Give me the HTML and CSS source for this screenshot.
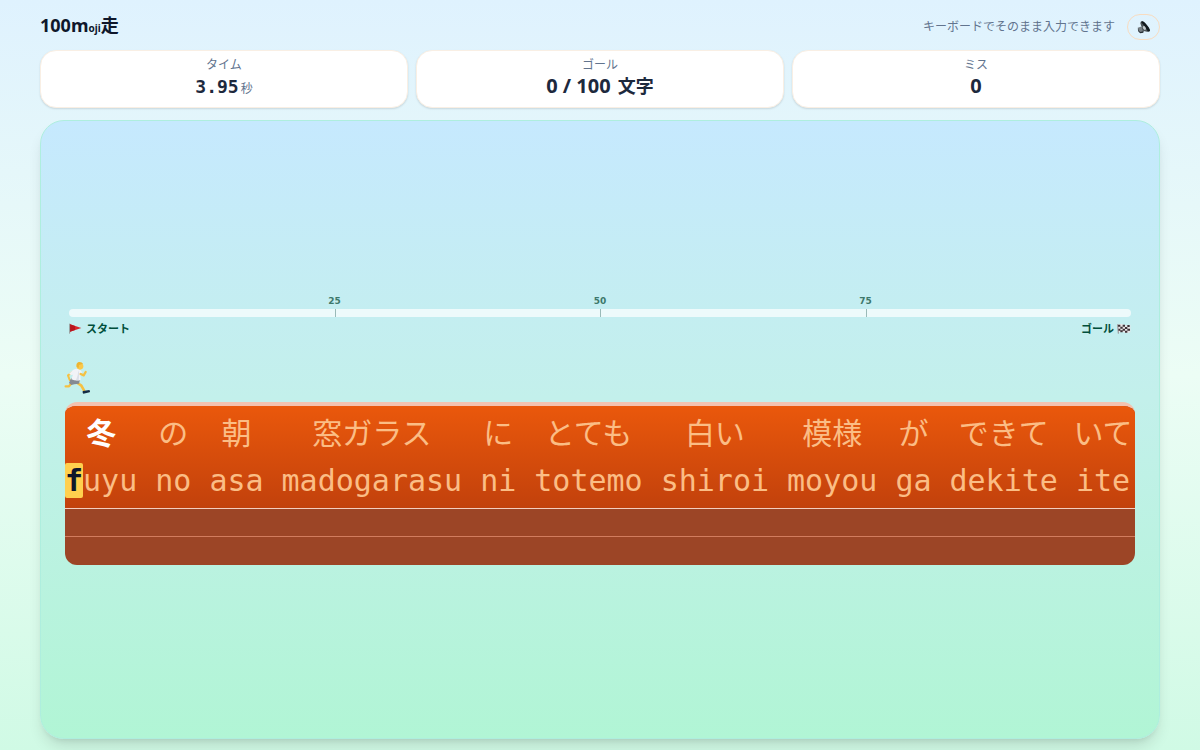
FILE: index.html
```html
<!DOCTYPE html>
<html lang="ja">
<head>
<meta charset="utf-8">
<meta name="viewport" content="width=device-width, initial-scale=1">
<title>100moji走</title>
<link rel="stylesheet" href="styles.css">
</head>
<body>
<div class="app">
  <header class="header">
    <h1 class="logo">100m<span class="logo-sub">oji</span>走</h1>
    <p class="hint">キーボードでそのまま入力できます</p>
    <button class="sound" type="button" aria-label="サウンド">
      <svg width="14" height="14" viewBox="0 0 42 42" aria-hidden="true">
        <path d="M2 23l9-3 9 5-1 11-8 3q-8-5-9-16z" fill="#777f84"/>
        <path d="M10 10q0-7 7-6 6 2 12 10 9 10 10 17-1 5-9 4l-13-3-4-13z" fill="#4d5559"/>
        <path d="M12 6q5-5 12 3 11 11 15 22 0 5-7 3-5-13-20-28z" fill="#11191d"/>
        <ellipse cx="22" cy="24" rx="4" ry="6" transform="rotate(-35 22 24)" fill="#c3cbce"/>
        <path d="M3 24q1 9 8 12l9-3-1 5-9 2q-9-5-7-16z" fill="#272f34"/>
      </svg>
    </button>
  </header>
  <section class="stats">
    <div class="stat"><span class="stat-label">タイム</span><p class="stat-value"><span class="time">3.95</span><span class="unit">秒</span></p></div>
    <div class="stat"><span class="stat-label">ゴール</span><p class="stat-value">0 / 100 <span class="chars">文字</span></p></div>
    <div class="stat"><span class="stat-label">ミス</span><p class="stat-value">0</p></div>
  </section>
  <main class="field">
    <div class="progress">
      <div class="marks"><span></span><span class="mark">25</span><span class="mark">50</span><span class="mark">75</span></div>
      <div class="bar"><span></span><span class="tick"></span><span class="tick"></span><span class="tick"></span></div>
      <div class="ends">
        <span class="end">
          <svg width="14" height="11" viewBox="0 0 42 33" aria-hidden="true">
            <path d="M3 4l34 11L3 26z" fill="#d7262b"/>
            <path d="M3 4l15 5v12L3 26z" fill="#b9151d"/>
            <path d="M2 2v30" stroke="#7b6a68" stroke-width="2"/>
          </svg>スタート</span>
        <span class="end">ゴール<svg width="14" height="11" viewBox="0 0 42 33" aria-hidden="true">
            <path d="M2 5q10-4 19 0t19 0v23q-10 4-19 0T4 28z" fill="#e7e5e6"/>
            <path d="M3 5h7v6H3zM17 5h7v6h-7zM31 6h7v6h-7zM10 11h7v6h-7zM24 12h7v6h-7zM4 17h6v6H4zM17 17h7v6h-7zM31 17h8v6h-8zM10 22h7v6h-7zM24 23h7v6h-7z" fill="#3c3237"/>
            <path d="M2 4l2 28" stroke="#74585a" stroke-width="2"/>
          </svg></span>
      </div>
    </div>
    <div class="runner">
      <svg width="32" height="42" viewBox="0 0 96 126" role="img" aria-label="ランナー">
        <path d="M32 48l-14 10 5 14" fill="none" stroke="#f5c142" stroke-width="6" stroke-linecap="round" stroke-linejoin="round"/>
        <path d="M30 80L21 91l-10 0" fill="none" stroke="#f5c142" stroke-width="7" stroke-linejoin="round" stroke-linecap="round"/>
        <path d="M42 78l16 11 8 14" fill="none" stroke="#f5c142" stroke-width="8" stroke-linejoin="round" stroke-linecap="round"/>
        <path d="M29 66l25 4-3 13-14 2-9 2-7-6q2-9 8-15z" fill="#858a92"/>
        <path d="M34 41q12-5 20 0l6 7-5 9 1 15q-14 4-28-2l5-14-6 1-6-4z" fill="#f2f3f7"/>
        <path d="M49 43l3 12-2 18-8 0 5-15z" fill="#dce0e8"/>
        <path d="M56 54l9 4 6-10" fill="none" stroke="#f5c142" stroke-width="7" stroke-linejoin="round" stroke-linecap="round"/>
        <circle cx="54" cy="31" r="10" fill="#fac84b"/>
        <path d="M44 33q-3-12 6-15 10-1 13 5l-12 4-1 9z" fill="#edb431"/>
        <path d="M62 105l20-3q4 4 1 7l-19 4q-3-2-2-8z" fill="#142c43"/>
      </svg>
    </div>
    <div class="track">
      <div class="lane">
        <div class="word active"><span class="kana">冬</span><span class="romaji"><mark class="cursor">f</mark>uyu</span></div>
        <div class="word"><span class="kana">の</span><span class="romaji">no</span></div>
        <div class="word"><span class="kana">朝</span><span class="romaji">asa</span></div>
        <div class="word"><span class="kana">窓ガラス</span><span class="romaji">madogarasu</span></div>
        <div class="word"><span class="kana">に</span><span class="romaji">ni</span></div>
        <div class="word"><span class="kana">とても</span><span class="romaji">totemo</span></div>
        <div class="word"><span class="kana">白い</span><span class="romaji">shiroi</span></div>
        <div class="word"><span class="kana">模様</span><span class="romaji">moyou</span></div>
        <div class="word"><span class="kana">が</span><span class="romaji">ga</span></div>
        <div class="word"><span class="kana">できて</span><span class="romaji">dekite</span></div>
        <div class="word"><span class="kana">いて</span><span class="romaji">ite</span></div>
      </div>
      <div class="strip"></div>
      <div class="strip"></div>
    </div>
  </main>
</div>
</body>
</html>
```
FILE: styles.css
```css
* { box-sizing: border-box; }
body {
  margin: 0;
  min-height: 100vh;
  background: linear-gradient(#dff2fe, #ecfdf5 50%, #d0fae5);
  color: #1d293d;
  font-family: "Noto Sans", "Noto Sans CJK JP", sans-serif;
}
h1, p { margin: 0; }
svg { display: block; flex: none; }
.app {
  display: flex;
  flex-direction: column;
  height: 100vh;
  padding: 12px 40px 11px;
}
.header { display: flex; align-items: center; height: 29px; }
.logo { flex: 1; font-size: 18px; line-height: 28px; font-weight: 700; color: #0f172b; }
.logo-sub { font-size: 10px; }
.hint { font-size: 12px; line-height: 16px; color: #62748e; }
.sound {
  display: flex;
  align-items: center;
  justify-content: center;
  width: 33px;
  height: 26px;
  margin-left: 12px;
  padding: 0;
  border: 1px solid #f8dcc0;
  border-radius: 13px;
  background: transparent;
}
.stats { display: grid; grid-template-columns: repeat(3, 1fr); gap: 8px; margin-top: 9px; }
.stat {
  height: 58px;
  padding: 6px 12px;
  border: 1px solid #f9efe4;
  border-radius: 16px;
  background: #fff;
  box-shadow: 0 1px 2px rgba(0, 0, 0, .12);
  text-align: center;
}
.stat-label { display: block; font-size: 12px; line-height: 16px; color: #62748e; }
.stat-value { font-size: 20px; line-height: 26px; font-weight: 700; }
.chars { margin-left: 2px; font-size: 18px; }
.time { font-family: "DejaVu Sans Mono", monospace; font-size: 18px; }
.unit { margin-left: 2px; font-size: 12px; font-weight: 400; color: #62748e; }
.field {
  flex: 1;
  display: flex;
  flex-direction: column;
  justify-content: center;
  margin-top: 12px;
  padding: 0 24px 2px;
  border: 1px solid #aeeede;
  border-radius: 24px;
  background: linear-gradient(#c6e9fe, #c3f0eb 45%, #b1f5d5);
  box-shadow: 0 10px 15px -3px rgba(0, 0, 0, .12), 0 4px 6px -4px rgba(0, 0, 0, .12);
}
.progress { padding: 0 4px; }
.marks, .bar { display: grid; grid-template-columns: repeat(4, 1fr); }
.mark {
  width: max-content;
  font-family: "DejaVu Sans", sans-serif;
  font-size: 9px;
  line-height: 16px;
  font-weight: 700;
  color: #3d786b;
  transform: translateX(-50%);
}
.bar { height: 8px; border-radius: 4px; background: rgba(255, 255, 255, .7); }
.tick { width: 1px; background: #9abab8; }
.ends { display: flex; justify-content: space-between; margin-top: 4px; font-size: 11px; line-height: 16px; font-weight: 700; color: #004f3b; }
.end { display: flex; align-items: center; gap: 3px; }
.runner { height: 48px; margin: 17px 0 0 -3px; padding-top: 2px; }
.track { overflow: hidden; border-top: 4px solid #f3c3b0; border-radius: 12px; background: #9c4526; }
.lane {
  display: flex;
  gap: 18px;
  height: 102px;
  background: linear-gradient(#ea580c, #c2410c);
  color: #fbbd85;
}
.word { flex: none; display: flex; flex-direction: column; align-items: center; }
.kana { margin: 4px -8px 0; font-size: 30px; line-height: 46px; }
.romaji { margin-top: 2px; font-family: "DejaVu Sans Mono", monospace; font-size: 30px; line-height: 45px; }
.active .kana { font-weight: 700; color: #fff; }
.cursor { border-radius: 2px; background: #ffd04e; color: #0f172b; font-weight: 700; }
.strip { height: 28px; border-top: 1px solid #f5cdbf; }
.strip + .strip { height: 29px; border-top-color: #d27c5e; }
```
